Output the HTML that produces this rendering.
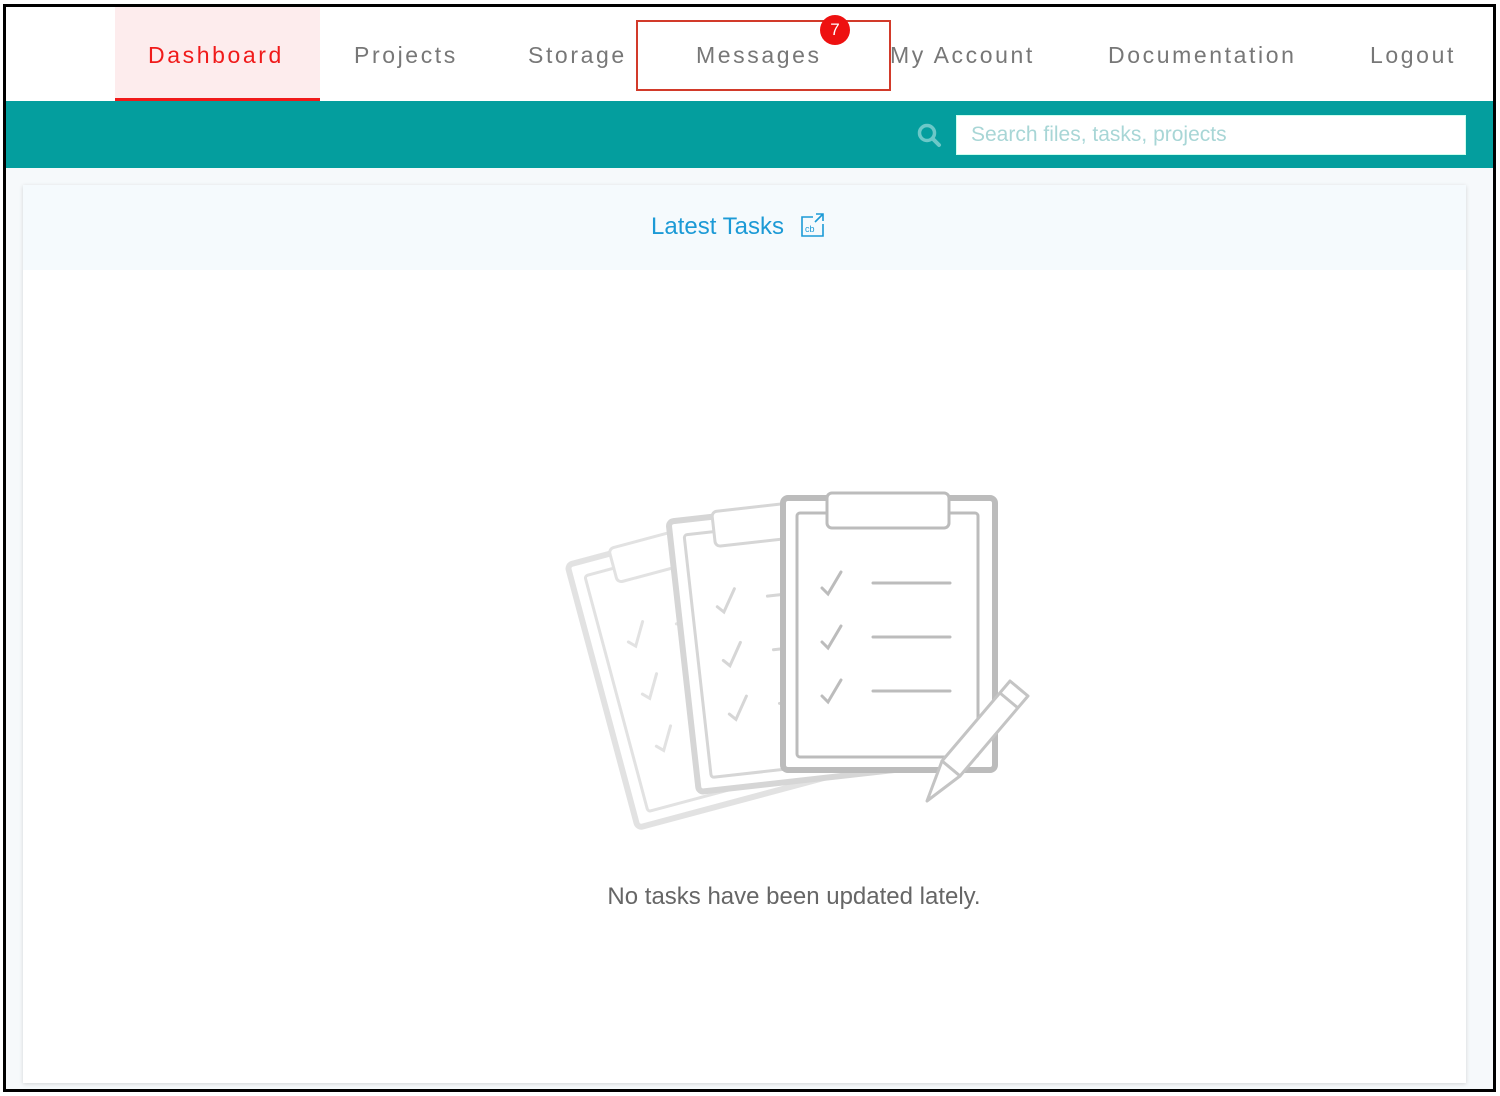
<!DOCTYPE html>
<html><head><meta charset="utf-8"><style>
*{margin:0;padding:0;box-sizing:border-box}
body{width:1500px;height:1096px;background:#fff;position:relative;overflow:hidden;font-family:"Liberation Sans",sans-serif}
.frame{position:absolute;left:3px;top:4px;width:1493px;height:1088px;border:3px solid #000;background:#f6f9fb}
.nav{position:absolute;left:6px;top:7px;width:1487px;height:94px;background:#fff}
.active{position:absolute;left:115px;top:7px;width:205px;height:94px;background:#fdeced;border-bottom:3px solid #f01a1a}
.teal{position:absolute;left:6px;top:101px;width:1487px;height:67px;background:#049e9e}
.search{position:absolute;left:956px;top:115px;width:510px;height:40px;background:#fff;border:1px solid #cfe;font-size:21px;color:#a8d6d6;padding:7px 14px}
.card{position:absolute;left:23px;top:185px;width:1443px;height:898px;background:#fff;box-shadow:0 1px 4px rgba(0,0,0,.15)}
.chead{position:absolute;left:0;top:0;width:100%;height:85px;background:#f5fafd;text-align:center}
.chead span{position:absolute;left:628px;top:28px;font-size:24px;color:#1c9ad6}
.msg{position:absolute;left:0;width:1500px;top:883px;text-align:center;font-size:24px;color:#666;padding-left:88px}
.n{position:absolute;top:42px;font-size:23px;letter-spacing:2.6px;color:#777;white-space:nowrap}
</style></head><body>
<div class="frame"></div>
<div class="nav"></div>
<div class="active"></div>
<a class="n" style="left:148px;color:#f01a1a">Dashboard</a>
<a class="n" style="left:354px">Projects</a>
<a class="n" style="left:528px">Storage</a>
<a class="n" style="left:696px">Messages</a>
<a class="n" style="left:890px">My Account</a>
<a class="n" style="left:1108px">Documentation</a>
<a class="n" style="left:1370px">Logout</a>
<div style="position:absolute;left:636px;top:20px;width:255px;height:71px;border:2px solid #d23a2a"></div>
<div style="position:absolute;left:820px;top:15px;width:30px;height:30px;border-radius:50%;background:#ee1111;color:#fff;font-size:17px;text-align:center;line-height:30px">7</div>
<div class="teal"></div>
<svg style="position:absolute;left:916px;top:122px" width="28" height="28" viewBox="0 0 28 28"><circle cx="11" cy="11" r="7.5" fill="none" stroke="#6cc8c8" stroke-width="3.5"/><line x1="16.5" y1="16.5" x2="23" y2="23" stroke="#6cc8c8" stroke-width="4" stroke-linecap="round"/></svg>
<div class="search">Search files, tasks, projects</div>
<div class="card"><div class="chead"><span>Latest Tasks</span>
<svg style="position:absolute;left:777px;top:27px" width="26" height="26" viewBox="0 0 26 26" fill="none" stroke="#1c9ad6" stroke-width="1.6"><path d="M13 5H2v19h21V12"/><path d="M16 2h7v7M23 2l-8 8"/><text x="5" y="20" font-size="9" fill="#1c9ad6" stroke="none" font-family="Liberation Sans">cb</text></svg>
</div></div>
<svg style="position:absolute;left:0;top:0" width="1500" height="1096">
<defs>
<g id="clip">
<rect x="-106" y="-136" width="212" height="272" rx="5" fill="#fff" stroke-width="6"/>
<rect x="-92" y="-121" width="181" height="244" rx="3" fill="none" stroke-width="3"/>
<rect x="-62" y="-141" width="122" height="35" rx="5" fill="#fff" stroke-width="3"/>
<g stroke-width="3" fill="none" stroke-linecap="round">
<path d="M-67 -46l6 6 13-22M-67 8l6 6 13-22M-67 62l6 6 13-22"/>
<path d="M-16 -51h77M-16 3h77M-16 57h77"/>
</g>
</g>
</defs>
<g transform="translate(705,669) rotate(-15)" stroke="#e2e2e2"><use href="#clip"/></g>
<g transform="translate(789,645) rotate(-6.4)" stroke="#d6d6d6"><use href="#clip"/></g>
<g transform="translate(889,634)" stroke="#bcbcbc"><use href="#clip"/></g>
<g stroke="#c4c4c4" stroke-width="3" fill="#fff" stroke-linejoin="round">
<path d="M1010 681l18 15-68 80-18-15z"/>
<path d="M942 761l18 15-33 25z" />
<path d="M1000 693l18 15" fill="none"/>
</g>
</svg>
<div class="msg">No tasks have been updated lately.</div>
</body></html>
